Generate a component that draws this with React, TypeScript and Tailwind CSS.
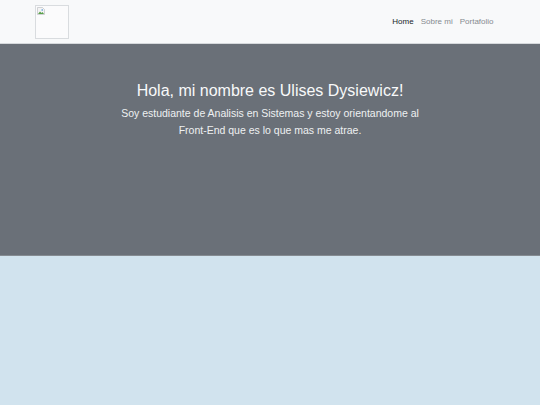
const navLinks = [
  { label: 'Home', active: true },
  { label: 'Sobre mi', active: false },
  { label: 'Portafolio', active: false },
];

function BrokenImage() {
  return (
    <div className="w-[34px] h-[34px] border border-[#d9dcdf] bg-[#fbfbfc] p-[1px]">
      <svg width="8" height="8" viewBox="0 0 8 8">
        <path d="M0.5 0.5h5l2 2v5h-7z" fill="#f4f4f4" stroke="#b5b9bd" strokeWidth="0.6" />
        <path d="M1 7l2-2.5 1.5 1.5 1-1 1.5 2z" fill="#5aa14b" />
        <circle cx="5.2" cy="3" r="0.8" fill="#4a8fd8" />
      </svg>
    </div>
  );
}

export default function App() {
  return (
    <div className="min-h-[405px] flex flex-col bg-[#d1e3ee] font-['Liberation_Sans',Arial,sans-serif]">
      {/* Navbar */}
      <nav className="bg-[#f8f9fa] border-b border-[#d6d9dc] pt-[5px] pb-[4px] pl-[35px] pr-[43px] flex items-center justify-between">
        <BrokenImage />
        <ul className="flex items-center">
          {navLinks.map((link) => (
            <li key={link.label}>
              <a
                href="#"
                className={`block px-[3.5px] text-[8px] leading-[12px] ${
                  link.active ? 'text-[#212529]' : 'text-[#868b90]'
                }`}
              >
                {link.label}
              </a>
            </li>
          ))}
        </ul>
      </nav>

      {/* Hero */}
      <section className="h-[212px] bg-[#6a7078] border-b border-[#858b91] pt-[37px] text-center">
        <h1 className="text-[16px] leading-[19px] text-[#f8f9fa] mb-[5px]">
          Hola, mi nombre es Ulises Dysiewicz!
        </h1>
        <p className="max-w-[320px] mx-auto text-[10.5px] leading-[16.5px] text-[#eef0f2]">
          Soy estudiante de Analisis en Sistemas y estoy orientandome al Front-End que es lo que mas me atrae.
        </p>
      </section>

      {/* About */}
      <section className="flex-1 bg-[#d1e3ee]" />
    </div>
  );
}
